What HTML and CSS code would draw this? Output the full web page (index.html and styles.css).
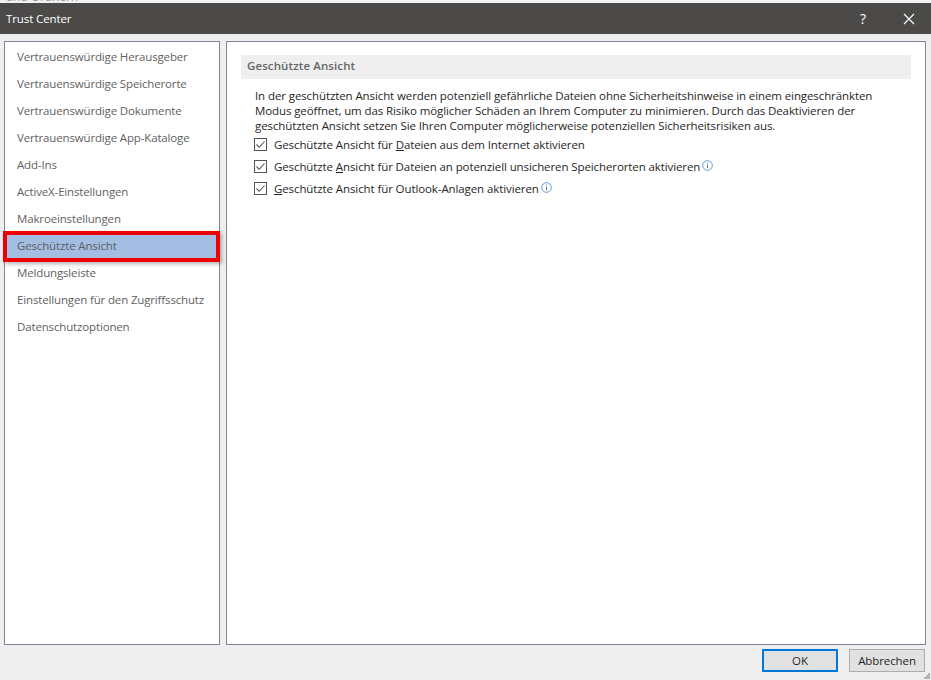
FILE: index.html
```html
<!DOCTYPE html>
<html lang="de">
<head>
<meta charset="utf-8">
<title>Trust Center</title>
<link rel="stylesheet" href="styles.css">
</head>
<body>
<div class="strip"><span class="strip-text">und Ordnern</span></div>
<header class="titlebar">
  <span class="title">Trust Center</span>
  <div class="title-actions">
    <span class="help">?</span>
    <svg class="close" width="12" height="12" viewBox="0 0 12 12"><path d="M1 1 L11 11 M11 1 L1 11" stroke="#fff" stroke-width="1.2" fill="none"/></svg>
  </div>
</header>
<main class="main">
  <nav class="nav">
    <a class="nav-item">Vertrauenswürdige Herausgeber</a>
    <a class="nav-item">Vertrauenswürdige Speicherorte</a>
    <a class="nav-item">Vertrauenswürdige Dokumente</a>
    <a class="nav-item">Vertrauenswürdige App-Kataloge</a>
    <a class="nav-item">Add-Ins</a>
    <a class="nav-item">ActiveX-Einstellungen</a>
    <a class="nav-item">Makroeinstellungen</a>
    <a class="nav-item selected">Geschützte Ansicht</a>
    <a class="nav-item">Meldungsleiste</a>
    <a class="nav-item">Einstellungen für den Zugriffsschutz</a>
    <a class="nav-item">Datenschutzoptionen</a>
  </nav>
  <section class="content">
    <h2 class="heading">Geschützte Ansicht</h2>
    <div class="body">
      <p class="intro">In der geschützten Ansicht werden potenziell gefährliche Dateien ohne Sicherheitshinweise in einem eingeschränkten<br>Modus geöffnet, um das Risiko möglicher Schäden an Ihrem Computer zu minimieren. Durch das Deaktivieren der<br>geschützten Ansicht setzen Sie Ihren Computer möglicherweise potenziellen Sicherheitsrisiken aus.</p>
      <div class="option">
        <svg class="check" width="13" height="13" viewBox="0 0 13 13"><rect x=".5" y=".5" width="12" height="12" fill="#fff" stroke="#555"/><path d="M2.5 6.5 L5.2 9.3 L10.5 3.5" fill="none" stroke="#555" stroke-width="1.1"/></svg>
        <span>Geschützte Ansicht für <u>D</u>ateien aus dem Internet aktivieren</span>
      </div>
      <div class="option">
        <svg class="check" width="13" height="13" viewBox="0 0 13 13"><rect x=".5" y=".5" width="12" height="12" fill="#fff" stroke="#555"/><path d="M2.5 6.5 L5.2 9.3 L10.5 3.5" fill="none" stroke="#555" stroke-width="1.1"/></svg>
        <span>Geschützte <u>A</u>nsicht für Dateien an potenziell unsicheren Speicherorten aktivieren</span>
        <svg class="info" width="11" height="11" viewBox="0 0 11 11"><circle cx="5.5" cy="5.5" r="4.8" fill="none" stroke="#5b9bd5"/><path d="M5.5 2.6 V3.6 M5.5 4.6 V8.2" stroke="#5a7fa8" fill="none"/></svg>
      </div>
      <div class="option">
        <svg class="check" width="13" height="13" viewBox="0 0 13 13"><rect x=".5" y=".5" width="12" height="12" fill="#fff" stroke="#555"/><path d="M2.5 6.5 L5.2 9.3 L10.5 3.5" fill="none" stroke="#555" stroke-width="1.1"/></svg>
        <span><u>G</u>eschützte Ansicht für Outlook-Anlagen aktivieren</span>
        <svg class="info" width="11" height="11" viewBox="0 0 11 11"><circle cx="5.5" cy="5.5" r="4.8" fill="none" stroke="#5b9bd5"/><path d="M5.5 2.6 V3.6 M5.5 4.6 V8.2" stroke="#5a7fa8" fill="none"/></svg>
      </div>
    </div>
  </section>
</main>
<footer class="footer">
  <button class="btn primary">OK</button>
  <button class="btn">Abbrechen</button>
  <svg class="grip" width="6" height="6" viewBox="0 0 6 6"><path d="M4 0h2v2H4zM2 2h2v2H2zM4 2h2v2H4zM0 4h2v2H0zM2 4h2v2H2zM4 4h2v2H4z" fill="#b5b5b5"/></svg>
</footer>
</body>
</html>
```
FILE: styles.css
```css
* { box-sizing: border-box; }
html, body { margin: 0; height: 100%; }
body {
  width: 931px;
  height: 680px;
  overflow: hidden;
  background: #efefef;
  font-family: "Open Sans", "Noto Sans", sans-serif;
  font-size: 11.5px;
  letter-spacing: -0.1px;
  color: #262626;
  display: flex;
  flex-direction: column;
}
.strip {
  height: 3px;
  background: #f1f1f1;
  overflow: hidden;
  padding-left: 6px;
  color: #999;
  line-height: 3px;
  font-size: 12px;
}
.strip-text { position: relative; top: -5px; }
.titlebar {
  height: 31px;
  background: #4c4a48;
  color: #fff;
  display: flex;
  align-items: center;
  justify-content: space-between;
  padding: 0 16px 0 6px;
  flex: none;
}
.title-actions { display: flex; align-items: center; gap: 37px; }
.help { font-size: 14px; line-height: 16px; }
.close { display: block; }
.main {
  flex: 1;
  display: flex;
  gap: 6px;
  padding: 7px 5px 0 4px;
  min-height: 0;
}
.nav {
  width: 216px;
  height: 604px;
  background: #fff;
  border: 1px solid #7f8797;
  padding-top: 2px;
  display: flex;
  flex-direction: column;
}
.nav-item {
  height: 27px;
  padding-left: 12px;
  line-height: 26px;
  color: #5f5f5f;
  white-space: nowrap;
  flex: none;
  position: relative;
  letter-spacing: -0.15px;
}
.nav-item.selected { background: #a3bde3; z-index: 1; }
.nav-item.selected::after {
  content: "";
  position: absolute;
  left: -2px;
  right: -1px;
  top: -2px;
  bottom: -2px;
  border: 4px solid #ee0000;
  box-shadow: 2px 2px 4px rgba(0,0,0,.3);
}
.content {
  flex: 1;
  height: 604px;
  background: #fff;
  border: 1px solid #7f8797;
  padding: 13px 14px 0;
}
.heading {
  margin: 0;
  height: 24px;
  line-height: 22px;
  background: #efefef;
  padding-left: 6px;
  font-size: 11.5px;
  font-weight: 600;
  letter-spacing: 0.1px;
  color: #666;
}
.body { padding: 9px 0 0 14px; }
.intro {
  margin: 0;
  line-height: 15px;
  white-space: nowrap;
}
.option {
  height: 22px;
  display: flex;
  align-items: center;
  white-space: nowrap;
}
.check { margin: 0 7px 0 -1px; flex: none; }
.info { margin: -2px 0 0 2px; flex: none; }
.footer {
  height: 35px;
  display: flex;
  justify-content: flex-end;
  align-items: flex-start;
  gap: 11px;
  padding: 4px 6px 0 0;
  position: relative;
  flex: none;
}
.btn {
  width: 76px;
  height: 23px;
  background: #e1e1e1;
  border: 1px solid #adadad;
  font: inherit;
  letter-spacing: inherit;
  color: #262626;
  padding: 0;
}
.btn.primary { border: 2px solid #0078d7; }
.grip { position: absolute; right: 1px; bottom: 1px; }
```
